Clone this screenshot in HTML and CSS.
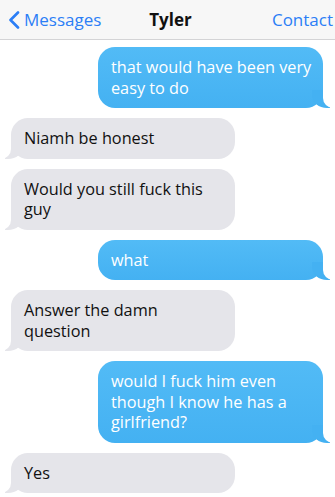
FILE: index.html
```html
<!DOCTYPE html>
<html>
<head>
<meta charset="utf-8">
<link rel="stylesheet" href="styles.css">
</head>
<body>
<header class="bar">
  <div class="back">
    <svg class="chev" width="12" height="18" viewBox="0 0 12 18"><path d="M10 1.5 L2.5 9 L10 16.5" fill="none" stroke="#2b7ef6" stroke-width="2.6" stroke-linecap="round" stroke-linejoin="round"/></svg>
    <span>Messages</span>
  </div>
  <div class="title">Tyler</div>
  <div class="contact">Contact</div>
</header>
<main class="thread">
  <div class="msg sent">that would have been very easy to do</div>
  <div class="msg recv">Niamh be honest</div>
  <div class="msg recv">Would you still fuck this guy</div>
  <div class="msg sent">what</div>
  <div class="msg recv">Answer the damn question</div>
  <div class="msg sent">would I fuck him even though I know he has a girlfriend?</div>
  <div class="msg recv">Yes</div>
</main>
</body>
</html>
```
FILE: styles.css
```css
html, body {
  margin: 0;
  padding: 0;
  background: #ffffff;
  font-family: "Open Sans", "Noto Sans", sans-serif;
  overflow: hidden;
}
.bar {
  height: 39px;
  background: #f7f7f7;
  border-bottom: 1px solid #d4d4d6;
  display: grid;
  grid-template-columns: 1fr auto 1fr;
  align-items: center;
  padding: 0 2px 0 8px;
  font-size: 17px;
}
.back {
  display: flex;
  align-items: center;
  gap: 4px;
  color: #2b7ef6;
}
.chev { display: block; margin-top: 1px; }
.title {
  font-weight: 700;
  color: #111;
}
.contact {
  justify-self: end;
  color: #2b7ef6;
}
.thread {
  display: flex;
  flex-direction: column;
  gap: 10px;
  padding: 7px 12px 0 11px;
}
.msg {
  position: relative;
  width: 224px;
  box-sizing: border-box;
  padding: 10px 13px;
  border-radius: 17px;
  font-size: 16.25px;
  line-height: 20.5px;
}
.sent {
  align-self: flex-end;
  width: 225px;
  padding-right: 8px;
  color: #fff;
  background: linear-gradient(#52bbf6, #44b1f2);
}
.recv {
  align-self: flex-start;
  color: #111;
  background: #e5e5ea;
}
.sent::before {
  content: "";
  position: absolute;
  right: -7px;
  bottom: 0;
  width: 18px;
  height: 18px;
  background: #44b1f2;
  border-bottom-left-radius: 15px 13px;
}
.sent::after {
  content: "";
  position: absolute;
  right: -26px;
  bottom: 0;
  width: 26px;
  height: 20px;
  background: #fff;
  border-bottom-left-radius: 10px;
}
.recv::before {
  content: "";
  position: absolute;
  left: -6px;
  bottom: 0;
  width: 18px;
  height: 18px;
  background: #e5e5ea;
  border-bottom-right-radius: 15px 13px;
}
.recv::after {
  content: "";
  position: absolute;
  left: -26px;
  bottom: 0;
  width: 26px;
  height: 20px;
  background: #fff;
  border-bottom-right-radius: 10px;
}
```
